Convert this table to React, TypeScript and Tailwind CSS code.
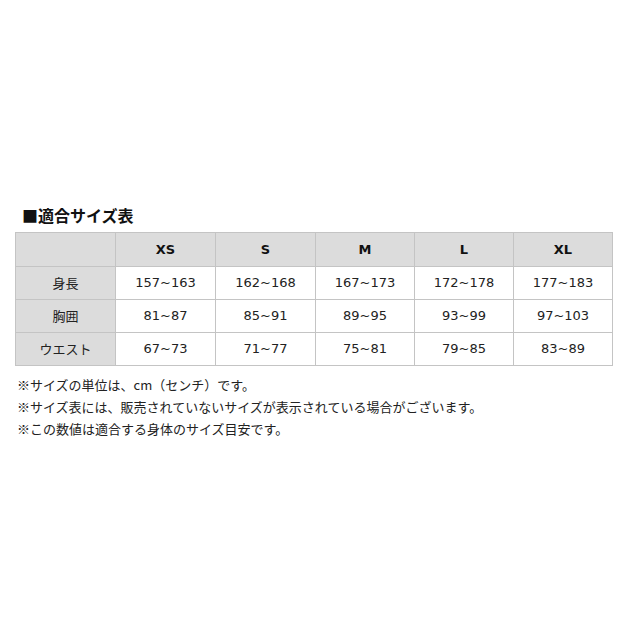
import React from "react";

const sizes = ["XS", "S", "M", "L", "XL"];
const rows: { label: string; values: string[] }[] = [
  { label: "身長", values: ["157~163", "162~168", "167~173", "172~178", "177~183"] },
  { label: "胸囲", values: ["81~87", "85~91", "89~95", "93~99", "97~103"] },
  { label: "ウエスト", values: ["67~73", "71~77", "75~81", "79~85", "83~89"] },
];

const font = { fontFamily: '"DejaVu Sans", "Noto Sans CJK JP", sans-serif' };

export default function App() {
  return (
    <div className="w-[640px] h-[640px] bg-white text-[#222] pt-[205px] pl-[15px]" style={font}>
      <div className="pl-[7px] h-[27px] text-[16px] font-bold leading-[20px] text-[#111]" style={{ fontFamily: '"Noto Sans CJK JP", sans-serif' }}>
        ■適合サイズ表
      </div>
      <div className="grid grid-cols-[100px_100px_100px_99px_99px_99px] w-[598px] border-t border-l border-[#c4c4c4]">
        <div className="h-[34px] bg-[#dcdcdc] border-r border-b border-[#c4c4c4]" />
        {sizes.map((s) => (
          <div key={s} className="h-[34px] bg-[#dcdcdc] border-r border-b border-[#c4c4c4] flex items-center justify-center text-[13px] font-bold text-[#111]">
            {s}
          </div>
        ))}
        {rows.map((r) => (
          <React.Fragment key={r.label}>
            <div className="h-[33px] bg-[#dcdcdc] border-r border-b border-[#c4c4c4] flex items-center justify-center text-[13px]" style={{ fontFamily: '"Noto Sans CJK JP", sans-serif' }}>
              {r.label}
            </div>
            {r.values.map((v, i) => (
              <div key={i} className="h-[33px] bg-white border-r border-b border-[#c4c4c4] flex items-center justify-center text-[13px]">
                {v}
              </div>
            ))}
          </React.Fragment>
        ))}
      </div>
      <div className="pt-[8px] pl-[2px] text-[13px] leading-[22px] text-[#222]" style={{ fontFamily: '"Noto Sans CJK JP", sans-serif' }}>
        <div>※サイズの単位は、cm（センチ）です。</div>
        <div>※サイズ表には、販売されていないサイズが表示されている場合がございます。</div>
        <div>※この数値は適合する身体のサイズ目安です。</div>
      </div>
    </div>
  );
}
